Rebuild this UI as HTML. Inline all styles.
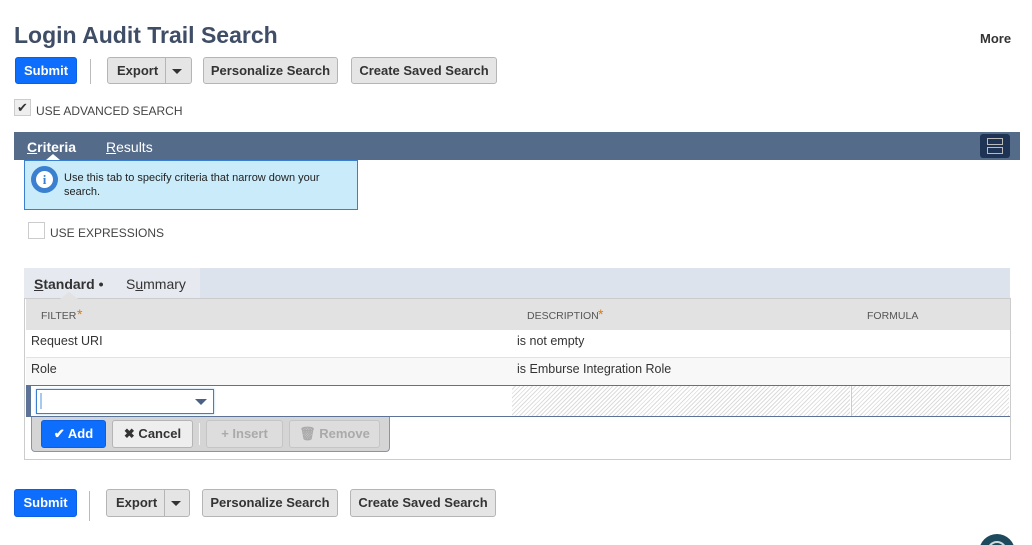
<!DOCTYPE html>
<html style="width:1032px;height:545px;overflow:hidden"><head><meta charset="utf-8"><style>
*{box-sizing:border-box;margin:0;padding:0}
body{width:1032px;height:545px;overflow:hidden;background:#fff;font-family:"Liberation Sans",sans-serif;position:relative;color:#333}
.a{position:absolute}
.btn{position:absolute;height:27px;border:1px solid #b5b5b5;border-radius:3px;background:#e5e5e5;font-size:13px;font-weight:bold;color:#333;line-height:25px;text-align:center}
.sub{background:#0d6efd;border-color:#0b5fe0;color:#fff}
.tri{display:inline-block;width:0;height:0;border-left:5px solid transparent;border-right:5px solid transparent;border-top:5px solid #333;vertical-align:middle}
.hatch{background:repeating-linear-gradient(135deg,#fff 0 2px,#dcdcdc 2px 3px)}
.hd{font-size:10.5px;color:#555;line-height:12px}
.st{position:absolute;color:#d47b1b;font-size:14px;line-height:14px;top:-3px}
</style></head><body>
<div class="a" style="left:14px;top:22px;font-size:23px;font-weight:bold;color:#3f4d66">Login Audit Trail Search</div>
<div class="a" style="left:980px;top:31px;font-size:13px;font-weight:bold;color:#333">More</div>

<div class="btn sub" style="left:15px;top:57px;width:62px">Submit</div>
<div class="a" style="left:90px;top:59px;width:1px;height:25px;background:#bbb"></div>
<div class="btn" style="left:107px;top:57px;width:85px;text-align:left;padding-left:9px">Export<span class="a" style="left:57px;top:0;width:1px;height:25px;background:#b5b5b5"></span><span class="a" style="left:64px;top:0"><span class="tri"></span></span></div>
<div class="btn" style="left:203px;top:57px;width:135px">Personalize Search</div>
<div class="btn" style="left:351px;top:57px;width:146px">Create Saved Search</div>

<div class="a" style="left:14px;top:99px;width:17px;height:17px;border:1px solid #ccc;background:#eee;font-size:13px;line-height:15px;text-align:center;color:#333">✔</div>
<div class="a" style="left:36px;top:104px;font-size:12px;color:#444">USE ADVANCED SEARCH</div>

<div class="a" style="left:14px;top:132px;width:1006px;height:28px;background:#546b8a"></div>
<div class="a" style="left:27px;top:139px;font-size:14px;font-weight:bold;color:#fff"><u>C</u>riteria</div>
<div class="a" style="left:106px;top:139px;font-size:14px;color:#fff"><u>R</u>esults</div>
<div class="a" style="left:46px;top:154px;width:0;height:0;border-left:7px solid transparent;border-right:7px solid transparent;border-bottom:6px solid #fff"></div>
<div class="a" style="left:980px;top:134px;width:30px;height:24px;background:#1f3354;border-radius:3px"></div>
<div class="a" style="left:987px;top:138px;width:16px;height:7px;border:1.5px solid #bbb"></div>
<div class="a" style="left:987px;top:147px;width:16px;height:7px;border:1.5px solid #bbb"></div>

<div class="a" style="left:24px;top:160px;width:334px;height:50px;background:#c9ebfa;border:1px solid #3a7fd0"></div>
<div class="a" style="left:31px;top:166px;width:27px;height:27px;border-radius:50%;background:#3a7fd0"></div>
<div class="a" style="left:36px;top:171px;width:17px;height:17px;border-radius:50%;background:#fff;color:#3a7fd0;font-weight:bold;font-size:13px;line-height:17px;text-align:center;font-family:'Liberation Serif',serif">i</div>
<div class="a" style="left:64px;top:171px;width:290px;font-size:11px;line-height:14px;color:#222">Use this tab to specify criteria that narrow down your search.</div>

<div class="a" style="left:28px;top:222px;width:17px;height:17px;border:1px solid #ccc;background:#fff"></div>
<div class="a" style="left:50px;top:226px;font-size:12px;color:#444">USE EXPRESSIONS</div>

<div class="a" style="left:24px;top:268px;width:986px;height:30px;background:#dce3ec"></div>
<div class="a" style="left:24px;top:268px;width:176px;height:30px;background:#e6eaf0"></div>
<div class="a" style="left:34px;top:276px;font-size:14px;font-weight:bold;color:#333"><u>S</u>tandard •</div>
<div class="a" style="left:126px;top:276px;font-size:14px;color:#333">S<u>u</u>mmary</div>

<div class="a" style="left:24px;top:298px;width:987px;height:162px;border:1px solid #ccc;background:#fff"></div>
<div class="a" style="left:26px;top:299px;width:984px;height:31px;background:#e2e2e2"></div>
<div class="a" style="left:60px;top:292px;width:0;height:0;border-left:9px solid transparent;border-right:9px solid transparent;border-bottom:7px solid #e2e2e2"></div>
<div class="a hd" style="left:41px;top:310px">FILTER<span class="st" style="left:36px">*</span></div>
<div class="a hd" style="left:527px;top:310px">DESCRIPTION<span class="st" style="left:71px">*</span></div>
<div class="a hd" style="left:867px;top:310px">FORMULA</div>
<div class="a" style="left:26px;top:357px;width:984px;height:28px;background:#f8f8f8;border-top:1px solid #e2e2e2"></div>
<div class="a" style="left:31px;top:334px;font-size:12.5px;color:#333">Request URI</div>
<div class="a" style="left:517px;top:334px;font-size:12.5px;color:#333">is not empty</div>
<div class="a" style="left:31px;top:362px;font-size:12.5px;color:#333">Role</div>
<div class="a" style="left:517px;top:362px;font-size:12.5px;color:#333">is Emburse Integration Role</div>
<div class="a" style="left:26px;top:385px;width:984px;height:32px;border-top:1px solid #5c7397;border-bottom:1px solid #5c7397;background:#fff"></div>
<div class="a" style="left:26px;top:386px;width:5px;height:30px;background:#5c7397"></div>
<div class="a hatch" style="left:512px;top:386px;width:338px;height:30px"></div>
<div class="a" style="left:851px;top:386px;width:1px;height:30px;background:#ccc"></div>
<div class="a hatch" style="left:852px;top:386px;width:157px;height:30px"></div>
<div class="a" style="left:36px;top:389px;width:178px;height:25px;border:1px solid #3a7fd0;background:#fff;box-shadow:0 0 2px #9cc3ee"></div>
<div class="a" style="left:40px;top:393px;width:2px;height:16px;background:#a8c8f0"></div>
<div class="a" style="left:195px;top:399px;width:0;height:0;border-left:6px solid transparent;border-right:6px solid transparent;border-top:6px solid #4a6184"></div>
<div class="a" style="left:31px;top:417px;width:359px;height:35px;background:#d5d5d5;border:1px solid #8a94a6;border-top:none;border-radius:0 0 4px 4px"></div>
<div class="btn sub" style="left:41px;top:420px;width:65px;height:28px;line-height:26px">✔ Add</div>
<div class="btn" style="left:112px;top:420px;width:81px;height:28px;line-height:26px;background:#eee">✖ Cancel</div>
<div class="a" style="left:199px;top:423px;width:1px;height:22px;background:#f5f5f5"></div>
<div class="btn" style="left:206px;top:420px;width:77px;height:28px;line-height:26px;color:#aaa;background:#ddd;border-color:#c5c5c5">+ Insert</div>
<div class="btn" style="left:289px;top:420px;width:91px;height:28px;line-height:26px;color:#aaa;background:#ddd;border-color:#c5c5c5">🗑 Remove</div>

<div class="btn sub" style="left:14px;top:489px;width:63px;height:28px">Submit</div>
<div class="a" style="left:89px;top:491px;width:1px;height:30px;background:#bbb"></div>
<div class="btn" style="left:106px;top:489px;width:84px;height:28px;text-align:left;padding-left:9px">Export<span class="a" style="left:57px;top:0;width:1px;height:26px;background:#b5b5b5"></span><span class="a" style="left:64px;top:0"><span class="tri"></span></span></div>
<div class="btn" style="left:202px;top:489px;width:136px;height:28px">Personalize Search</div>
<div class="btn" style="left:350px;top:489px;width:146px;height:28px">Create Saved Search</div>

<div class="a" style="left:979px;top:534px;width:36px;height:36px;border-radius:50%;background:#1e4a5e"></div>
<div class="a" style="left:987px;top:541px;width:20px;height:20px;border-radius:50%;border:2px solid #cfd8dc"></div>
</body></html>
